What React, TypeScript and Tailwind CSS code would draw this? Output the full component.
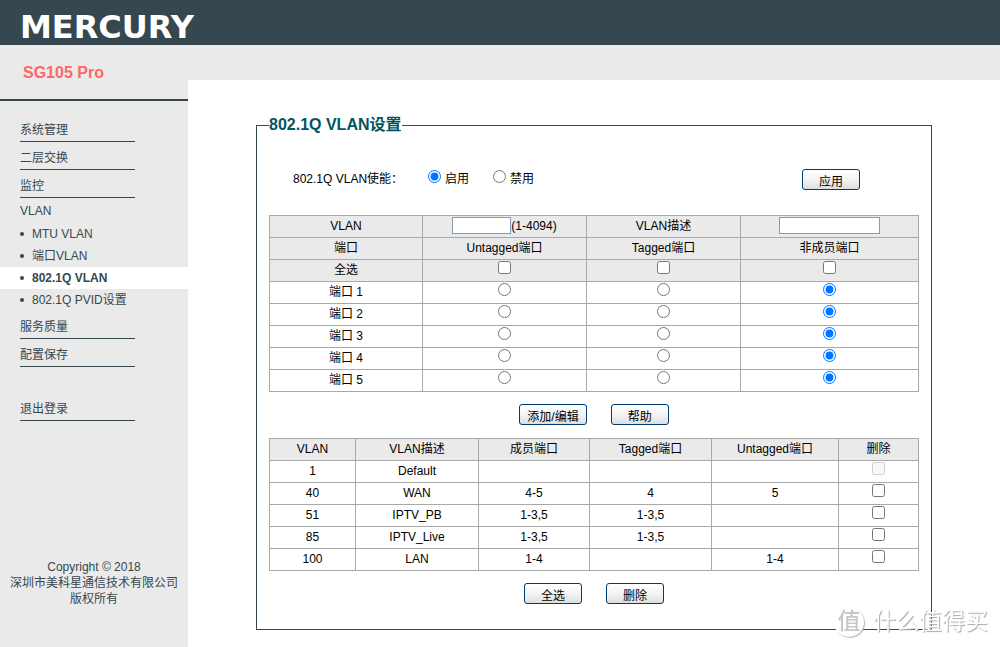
import { useState, type ReactNode } from 'react'

const ports = [1, 2, 3, 4, 5]
const modes = ['untagged', 'tagged', 'none']

const vlans = [
  { id: 1, name: 'Default', members: '', tagged: '', untagged: '' },
  { id: 40, name: 'WAN', members: '4-5', tagged: '4', untagged: '5' },
  { id: 51, name: 'IPTV_PB', members: '1-3,5', tagged: '1-3,5', untagged: '' },
  { id: 85, name: 'IPTV_Live', members: '1-3,5', tagged: '1-3,5', untagged: '' },
  { id: 100, name: 'LAN', members: '1-4', tagged: '', untagged: '1-4' },
]

const vlanPages = ['MTU VLAN', '端口VLAN', '802.1Q VLAN', '802.1Q PVID设置']

function MenuLink({ children }: { children: ReactNode }) {
  return (
    <a href="#" className="ml-5 block h-7 w-[115px] border-b border-[#37474f] pt-2 leading-4">
      {children}
    </a>
  )
}

function Button({ children }: { children: ReactNode }) {
  return (
    <button
      type="button"
      className="h-[21px] min-w-[58px] rounded-[3px] border border-[#003c74] bg-linear-to-b from-white via-[#f4f4f4] to-[#dedede] px-[7px] pt-[5px] leading-[14px]"
    >
      {children}
    </button>
  )
}

function Th({ children }: { children?: ReactNode }) {
  return <th className="h-[22px] border border-[#a9a9a9] bg-[#eaeaea] p-0 pb-0.5 font-normal">{children}</th>
}

function Td({ children }: { children?: ReactNode }) {
  return <td className="h-[22px] border border-[#a9a9a9] p-0 pb-0.5">{children}</td>
}

function Sidebar() {
  return (
    <aside className="flex w-[188px] shrink-0 flex-col bg-[#eaeaea] text-[#37474f]">
      <h1 className="mb-[13px] border-b-2 border-[#37474f] pt-4 pb-[14px] pl-[23px] text-base font-bold text-[#ff6666]">
        SG105 Pro
      </h1>
      <nav>
        <MenuLink>系统管理</MenuLink>
        <MenuLink>二层交换</MenuLink>
        <MenuLink>监控</MenuLink>
        <a href="#" className="block h-[25px] pt-[5px] pl-5 leading-4">VLAN</a>
        <ul>
          {vlanPages.map((page) => (
            <li key={page} className={page === '802.1Q VLAN' ? 'bg-white font-bold' : ''}>
              <a href="#" className="flex h-[22px] items-center gap-2 pl-5">
                <span className="size-1 rounded-full bg-[#37474f]" />
                {page}
              </a>
            </li>
          ))}
        </ul>
        <MenuLink>服务质量</MenuLink>
        <MenuLink>配置保存</MenuLink>
        <div className="mt-[26px]">
          <MenuLink>退出登录</MenuLink>
        </div>
      </nav>
      <p className="mt-auto pb-10 text-center leading-4">
        Copyright © 2018
        <br />
        深圳市美科星通信技术有限公司
        <br />
        版权所有
      </p>
    </aside>
  )
}

function PortTable() {
  const [selected, setSelected] = useState<Record<number, string>>({})

  return (
    <table className="w-full table-fixed border-collapse text-center leading-4">
      <colgroup>
        <col className="w-[153px]" />
        <col className="w-[164px]" />
        <col className="w-[154px]" />
        <col className="w-[178px]" />
      </colgroup>
      <thead>
        <tr>
          <Th><label htmlFor="vid">VLAN</label></Th>
          <Th>
            <span className="flex items-center justify-center">
              <input id="vid" className="h-[17px] w-[59px] border border-[#7f9db9] bg-white px-1" />
              (1-4094)
            </span>
          </Th>
          <Th><label htmlFor="vname">VLAN描述</label></Th>
          <Th>
            <input id="vname" className="mx-auto block h-[17px] w-[101px] border border-[#7f9db9] bg-white px-1" />
          </Th>
        </tr>
        <tr>
          <Th>端口</Th>
          <Th>Untagged端口</Th>
          <Th>Tagged端口</Th>
          <Th>非成员端口</Th>
        </tr>
        <tr>
          <Th>全选</Th>
          {modes.map((mode) => (
            <Th key={mode}>
              <input
                type="checkbox"
                aria-label={mode}
                className="mx-auto mb-1 block size-[13px]"
                onChange={() => setSelected(Object.fromEntries(ports.map((p) => [p, mode])))}
              />
            </Th>
          ))}
        </tr>
      </thead>
      <tbody>
        {ports.map((port) => (
          <tr key={port}>
            <Td>端口 {port}</Td>
            {modes.map((mode) => (
              <Td key={mode}>
                <input
                  type="radio"
                  name={`port${port}`}
                  aria-label={`${port} ${mode}`}
                  className="mx-auto mb-1 block size-[13px]"
                  checked={(selected[port] ?? 'none') === mode}
                  onChange={() => setSelected({ ...selected, [port]: mode })}
                />
              </Td>
            ))}
          </tr>
        ))}
      </tbody>
    </table>
  )
}

function VlanTable() {
  return (
    <table className="w-full table-fixed border-collapse text-center leading-4">
      <colgroup>
        <col className="w-[86px]" />
        <col className="w-[123px]" />
        <col className="w-[111px]" />
        <col className="w-[122px]" />
        <col className="w-[127px]" />
        <col className="w-[80px]" />
      </colgroup>
      <thead>
        <tr>
          <Th>VLAN</Th>
          <Th>VLAN描述</Th>
          <Th>成员端口</Th>
          <Th>Tagged端口</Th>
          <Th>Untagged端口</Th>
          <Th>删除</Th>
        </tr>
      </thead>
      <tbody>
        {vlans.map((v) => (
          <tr key={v.id}>
            <Td>{v.id}</Td>
            <Td>{v.name}</Td>
            <Td>{v.members}</Td>
            <Td>{v.tagged}</Td>
            <Td>{v.untagged}</Td>
            <Td>
              {/* le VLAN 1 ne peut pas être supprimé */}
              <input
                type="checkbox"
                aria-label={v.name}
                disabled={v.id === 1}
                className="mx-auto mb-1 block size-[13px]"
              />
            </Td>
          </tr>
        ))}
      </tbody>
    </table>
  )
}

export default function App() {
  return (
    <div className="flex min-h-screen flex-col bg-white font-['Liberation_Sans','Noto_Sans_CJK_SC',sans-serif] text-xs text-black">
      <header className="flex h-[45px] items-end bg-[#37474f] pl-5">
        <span className="font-['DejaVu_Sans',sans-serif] text-[32px] leading-9 font-bold text-white">MERCURY</span>
      </header>
      <div className="flex flex-1">
        <Sidebar />
        <main className="min-w-0 flex-1">
          <div className="h-[35px] bg-[#eaeaea]" />
          <fieldset className="mx-[68px] mt-[33px] mb-4 border border-[#37474f] px-3 pb-[25px]">
            <legend className="text-base font-bold text-[#005560]">802.1Q VLAN设置</legend>
            <div className="mt-8 mb-[25px] flex h-[21px] items-center pr-[59px] pl-6">
              <span className="w-[135px] pb-0.5">802.1Q VLAN使能：</span>
              <label className="mr-6 flex items-center gap-1 pb-0.5">
                <input type="radio" name="enable" defaultChecked className="mb-1 size-[13px]" />
                启用
              </label>
              <label className="flex items-center gap-1 pb-0.5">
                <input type="radio" name="enable" className="mb-1 size-[13px]" />
                禁用
              </label>
              <div className="ml-auto">
                <Button>应用</Button>
              </div>
            </div>
            <PortTable />
            <div className="mt-3 mb-[13px] flex justify-center gap-6">
              <Button>添加/编辑</Button>
              <Button>帮助</Button>
            </div>
            <VlanTable />
            <div className="mt-3 flex justify-center gap-6">
              <Button>全选</Button>
              <Button>删除</Button>
            </div>
          </fieldset>
        </main>
      </div>
      <div className="pointer-events-none fixed right-3 bottom-[10px] flex items-center gap-[9px] text-[23px] text-white [text-shadow:1px_1px_1px_#a8a8a8]">
        <span className="flex size-[30px] items-center justify-center rounded-full bg-white font-medium text-[#c8c8c8] shadow-[1px_1px_1px_#b8b8b8] [text-shadow:none]">
          值
        </span>
        什么值得买
      </div>
    </div>
  )
}
